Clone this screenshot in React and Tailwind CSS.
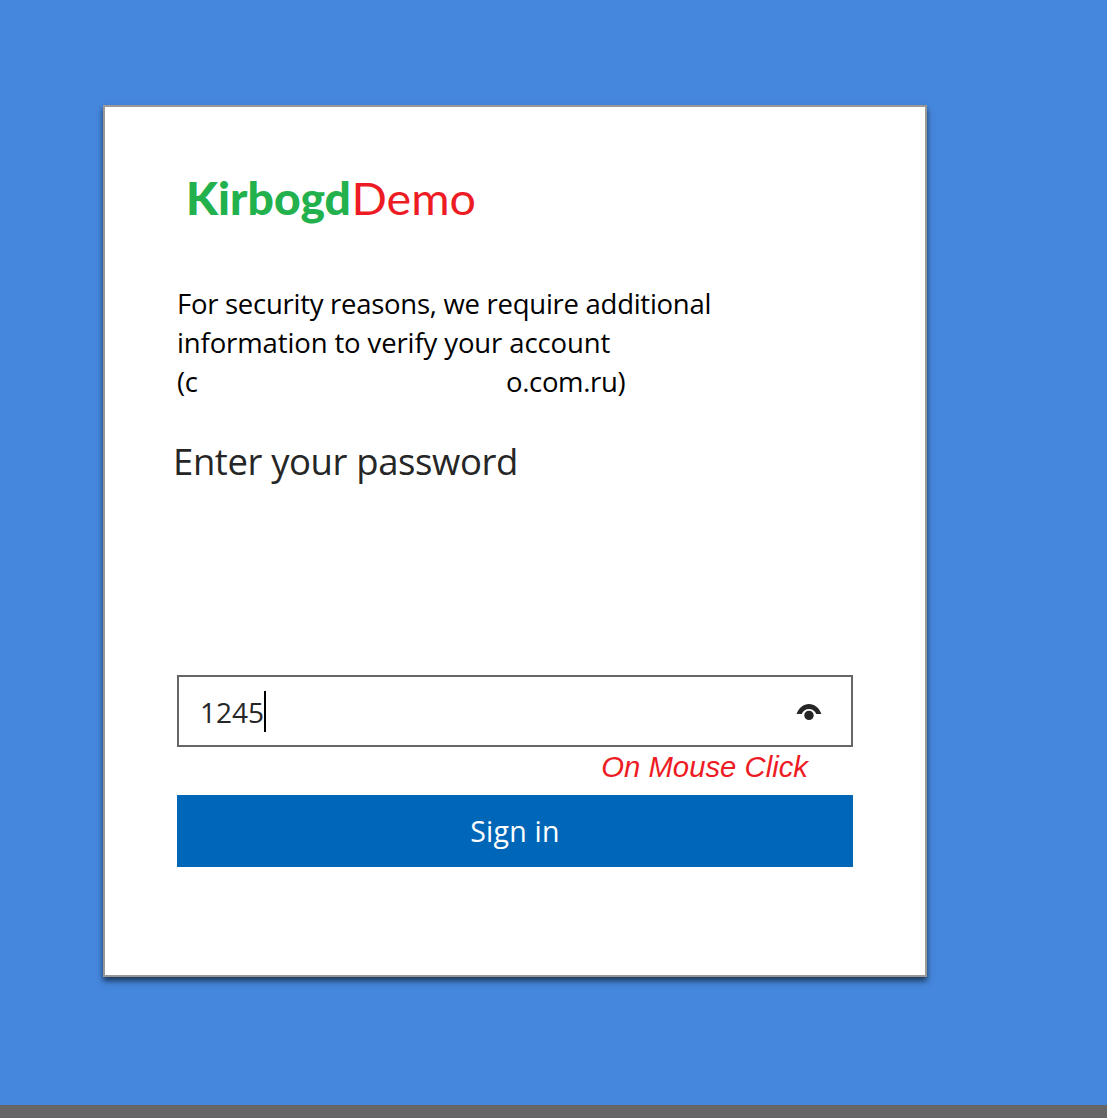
function RevealIcon() {
  return (
    <svg width="26" height="20" viewBox="0 0 26 20" fill="#262626" aria-label="Show password">
      <path d="M.6 12.900C2.900 6.800 7.400 3 13 3s10.100 3.800 12.400 9.900h-5.100C18.700 9.900 16.200 8 13 8s-5.700 1.900-7.300 4.900Z" />
      <circle cx="13" cy="14.4" r="4.7" />
    </svg>
  );
}

function Logo() {
  return (
    <svg width="310" height="60" fontFamily="Lato, sans-serif" fontSize="45">
      <text x="3" y="46" fontWeight="900" fill="#22b14c" textLength="165" lengthAdjust="spacingAndGlyphs">Kirbogd</text>
      <text x="168.500" y="46" fill="#ed1c24" textLength="124.500" lengthAdjust="spacingAndGlyphs">Demo</text>
    </svg>
  );
}

export default function App() {
  return (
    <div className="flex h-[1118px] w-[1107px] flex-col overflow-hidden bg-[#4587dd] font-['Open_Sans',sans-serif]">
      <div className="h-[1105px] pl-[103px] pt-[105px]">
        <main className="flex h-[872px] w-[824px] flex-col border-2 border-[#999] bg-white px-[72px] shadow-[0_4px_6px_rgba(0,0,0,0.6)]">
          <div className="ml-[6px] mt-[62px] h-[60px]">
            <Logo />
          </div>
          <div className="mt-[55px] whitespace-nowrap text-[27.5px] leading-[39px] text-black">
            <p className="tracking-[-0.27px]">For security reasons, we require additional</p>
            <p className="tracking-[-0.12px]">information to verify your account</p>
            <p className="flex tracking-[-0.35px]">
              <span className="w-[329px]">(c</span>
              <span>o.com.ru)</span>
            </p>
          </div>
          <h1 className="-ml-[4px] mt-[35px] h-[50px] whitespace-nowrap text-[36.5px] leading-[50px] tracking-[-0.4px] text-[#262626]">
            Enter your password
          </h1>
          <div className="mt-[189px] flex h-[72px] items-center border-2 border-[#666] pl-[21px] pr-[29px]">
            <span className="pt-[2px] text-[28px] leading-[40px] text-[#262626]">1245</span>
            <span className="h-[41px] w-[2px] bg-black" />
            <span className="ml-auto">
              <RevealIcon />
            </span>
          </div>
          <p className="h-[48px] pr-[45px] pt-[2px] text-right font-['Liberation_Sans',sans-serif] text-[29.3px] italic leading-[36px] text-[#ed1c24]">
            On Mouse Click
          </p>
          <button className="flex h-[72px] items-center justify-center bg-[#0067b8] text-[28.5px] tracking-[0.25px] text-white">
            Sign in
          </button>
        </main>
      </div>
      <div className="h-[13px] bg-[#666]" />
    </div>
  );
}
